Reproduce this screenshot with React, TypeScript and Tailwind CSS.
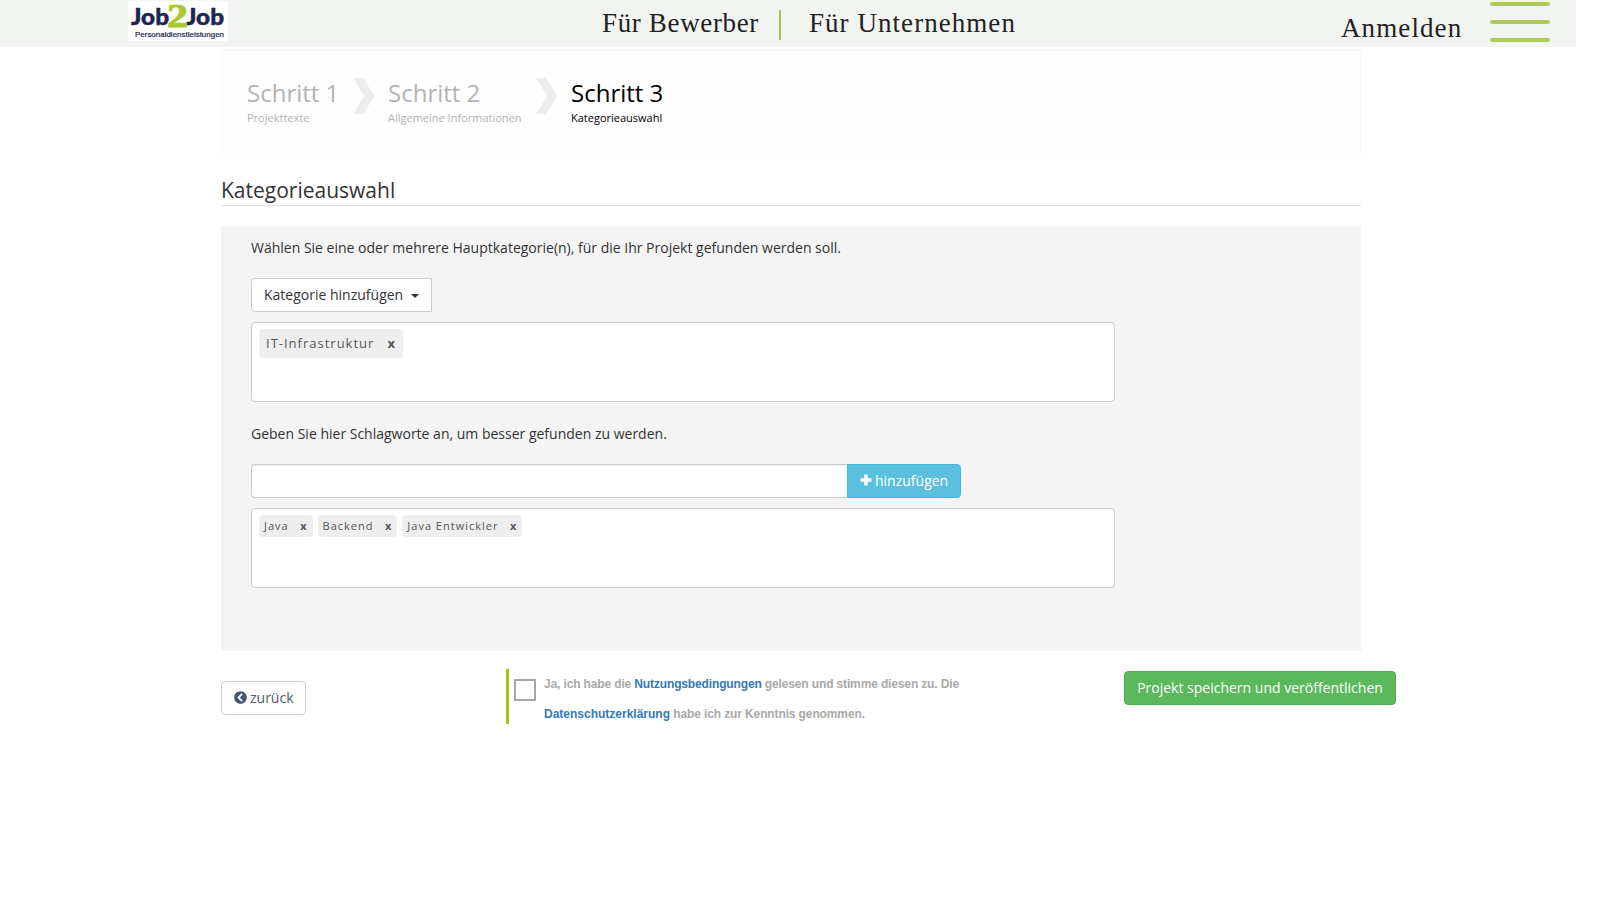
import { FaChevronCircleLeft } from "react-icons/fa";

function Logo() {
  return (
    <svg width="100" height="40" viewBox="0 0 100 40" className="block bg-white">
      <g fontFamily="Lato, sans-serif" fontWeight="900" fill="#1d2650" stroke="#1d2650" strokeWidth="0.5">
        <text x="3" y="24" fontSize="23" textLength="38" lengthAdjust="spacingAndGlyphs">Job</text>
        <text x="58" y="24" fontSize="23" textLength="38" lengthAdjust="spacingAndGlyphs">Job</text>
      </g>
      <text x="39" y="26" fontSize="33" fontFamily="'Liberation Serif', serif" fontWeight="700" fill="#a9c92f" stroke="#a9c92f" strokeWidth="1" textLength="21" lengthAdjust="spacingAndGlyphs">2</text>
      <text x="7" y="36" fontSize="8" fontFamily="'Liberation Sans', sans-serif" fill="#1d2650" stroke="#1d2650" strokeWidth="0.2" textLength="89" lengthAdjust="spacingAndGlyphs">Personaldienstleistungen</text>
    </svg>
  );
}

function Chevron() {
  return (
    <svg width="22" height="36" viewBox="0 0 22 36" className="mt-[27px] block shrink-0">
      <path d="M0 0H10L21.500 18L10 36H0L11 18Z" fill="#ededed" />
    </svg>
  );
}

function PlusIcon() {
  return (
    <svg width="12" height="12" viewBox="0 0 12 12" className="mr-[3px] -mt-px block">
      <path d="M4.300 0.500H7.700V4.300H11.500V7.700H7.700V11.500H4.300V7.700H0.500V4.300H4.300Z" fill="#fff" />
    </svg>
  );
}

function Step({ title, sub, className }: { title: string; sub: string; className: string }) {
  return (
    <div className={`shrink-0 pt-[25px] whitespace-nowrap ${className}`}>
      <div className="text-[24px] leading-[34px]">{title}</div>
      <div className="text-[11px] leading-4">{sub}</div>
    </div>
  );
}

function Tag({ label, large }: { label: string; large?: boolean }) {
  return (
    <span
      className={`flex items-center justify-between rounded-[4px] bg-[#eee] tracking-[1px] whitespace-nowrap text-[#555] ${
        large ? "h-[29px] w-[144px] pr-[7px] pl-[7px] text-[13px]" : "h-[22px] pr-[5px] pl-[5px] text-[11px]"
      }`}
    >
      {label}
      <b className={large ? "" : "ml-[11.5px]"}>x</b>
    </span>
  );
}

export default function App() {
  return (
    <div className="h-[900px] w-[1600px] overflow-hidden bg-white font-['Open_Sans',sans-serif] text-[14px] text-[#333]">
      <header className="flex h-[47px] w-[1576px] items-start bg-[#f2f4f1] font-['Palatino_Linotype','Liberation_Serif',serif] text-[27px] leading-[30px] whitespace-nowrap text-[#222]">
        <div className="mt-px ml-[128px] w-[474px]">
          <Logo />
        </div>
        <a className="mt-[8px] w-[177px] tracking-[0.65px]">Für Bewerber</a>
        <span className="mt-[10px] h-[30px] w-[2px] bg-[#a9c04a]" />
        <a className="mt-[8px] ml-[28px] w-[532px] tracking-[1.05px]">Für Unternehmen</a>
        <a className="mt-[13px] w-[149px] tracking-[1.1px]">Anmelden</a>
        <div className="mt-[2px] flex w-[60px] flex-col gap-[14px]">
          <span className="h-1 rounded-full bg-[#b0cb55]" />
          <span className="h-1 rounded-full bg-[#b0cb55]" />
          <span className="h-1 rounded-full bg-[#b0cb55]" />
        </div>
      </header>

      <main className="ml-[221px] w-[1140px]">
        <section className="mt-[2px] flex h-[107px] border-x border-t-2 border-[#f9f9f9] bg-[#fefefe] pl-[25px]">
          <Step title="Schritt 1" sub="Projekttexte" className="w-[106px] text-[#b3b3b3]" />
          <Chevron />
          <Step title="Schritt 2" sub="Allgemeine Informationen" className="ml-[13px] w-[148px] text-[#b3b3b3]" />
          <Chevron />
          <Step title="Schritt 3" sub="Kategorieauswahl" className="ml-[13px] text-black" />
        </section>

        <h2 className="mt-[19px] h-[31px] border-b border-[#e2e2e2] text-[21px] leading-[30px]">Kategorieauswahl</h2>

        <section className="mt-[20px] h-[425px] bg-[#f4f4f4] pt-[12px] pl-[30px]">
          <p className="leading-5">Wählen Sie eine oder mehrere Hauptkategorie(n), für die Ihr Projekt gefunden werden soll.</p>
          <button className="mt-5 flex h-[34px] w-[181px] items-center rounded-l-[4px] border border-[#ccc] bg-white pb-[2px] pl-3 whitespace-nowrap">
            Kategorie hinzufügen
            <span className="mt-[3px] ml-[8px] border-x-4 border-t-4 border-x-transparent border-t-[#333]" />
          </button>
          <div className="mt-[10px] flex h-[80px] w-[864px] items-start rounded-[4px] border border-[#ccc] bg-white p-[7px] pt-[6px]">
            <Tag label="IT-Infrastruktur" large />
          </div>
          <p className="mt-[22px] leading-5">Geben Sie hier Schlagworte an, um besser gefunden zu werden.</p>
          <div className="mt-5 flex">
            <input className="h-[34px] w-[596px] rounded-l-[4px] border border-r-0 border-[#ccc] bg-white px-3 shadow-[inset_0_1px_1px_rgba(0,0,0,0.075)]" />
            <button className="flex h-[34px] w-[114px] items-center rounded-r-[4px] border border-[#46b8da] bg-[#5bc0de] pb-[2px] pl-[12px] text-white">
              <PlusIcon />
              hinzufügen
            </button>
          </div>
          <div className="mt-[10px] flex h-[80px] w-[864px] items-start gap-[5px] rounded-[4px] border border-[#ccc] bg-white p-[7px] pt-[6px]">
            <Tag label="Java" />
            <Tag label="Backend" />
            <Tag label="Java Entwickler" />
          </div>
        </section>
      </main>

      <footer className="mt-[18px] ml-[221px] flex w-[1175px] items-start">
        <button className="mt-[12px] flex h-[34px] w-[85px] items-center rounded-[4px] border border-[#ccc] bg-white pb-[2px] pl-[12px] text-[#4f5b66]">
          <FaChevronCircleLeft className="mt-px mr-[3px] size-[13px] shrink-0 text-[#44546a]" />
          zurück
        </button>
        <div className="ml-[200px] flex h-[55px] border-l-3 border-[#a2c617]">
          <span className="mt-[10px] ml-[5px] size-[22px] border-2 border-[#a6a6a6] bg-white" />
          <p className="ml-[8px] font-['Liberation_Sans',sans-serif] text-[12px] leading-[30px] font-bold whitespace-nowrap text-[#a9a9a9]">
            <span className="tracking-[-0.14px]">
              Ja, ich habe die <a className="text-[#337ab7]">Nutzungsbedingungen</a> gelesen und stimme diesen zu. Die
            </span>
            <br />
            <a className="text-[#337ab7]">Datenschutzerklärung</a>
            <span className="tracking-[-0.12px]"> habe ich zur Kenntnis genommen.</span>
          </p>
        </div>
        <button className="mt-[2px] ml-auto h-[34px] w-[272px] rounded-[4px] border border-[#4cae4c] bg-[#5cb85c] pb-[2px] whitespace-nowrap text-white">
          Projekt speichern und veröffentlichen
        </button>
      </footer>
    </div>
  );
}
